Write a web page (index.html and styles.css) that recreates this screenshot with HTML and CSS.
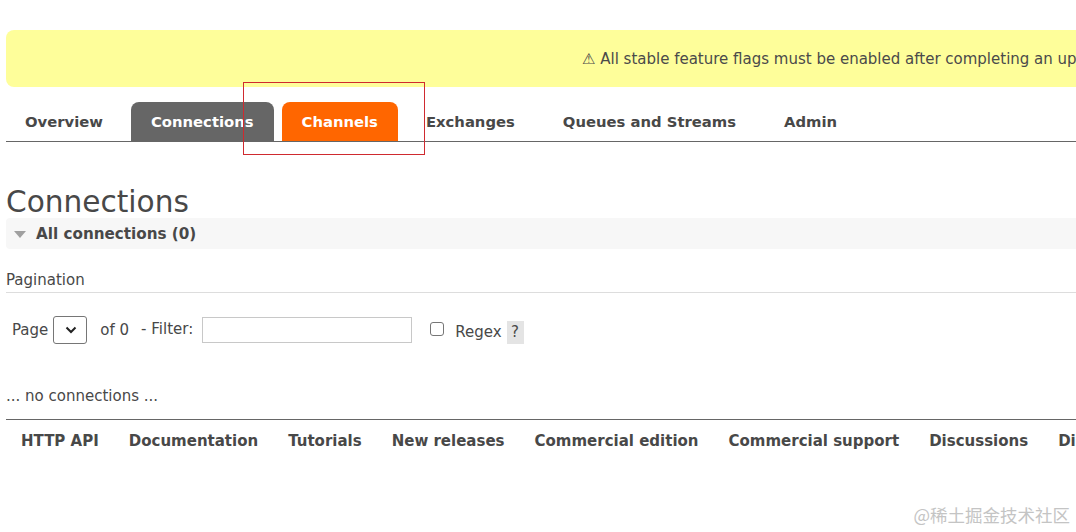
FILE: index.html
```html
<!DOCTYPE html>
<html>
<head>
<meta charset="utf-8">
<link rel="stylesheet" href="styles.css">
</head>
<body>
<div class="page">
  <div class="banner"><span class="banner-text">⚠ All stable feature flags must be enabled after completing an upgrade. Without enabling all flags, the upcoming releases cannot be used.</span></div>

  <ul class="tabs">
    <li class="tab">Overview</li>
    <li class="tab tab-selected">Connections</li>
    <li class="tab tab-hover">Channels</li>
    <li class="tab">Exchanges</li>
    <li class="tab">Queues and Streams</li>
    <li class="tab">Admin</li>
  </ul>

  <h1 class="title">Connections</h1>

  <div class="section-head">
    <span class="tri"></span>
    <span class="section-title">All connections (0)</span>
  </div>

  <div class="pagination-label">Pagination</div>

  <div class="filter-row">
    <span>Page</span>
    <span class="select"><svg width="12" height="8" viewBox="0 0 12 8"><path d="M1.5 1.5 L6 6 L10.5 1.5" fill="none" stroke="#222" stroke-width="2"/></svg></span>
    <span class="of">of 0</span>
    <span class="dash">- Filter:</span>
    <span class="input"></span>
    <span class="checkbox"></span>
    <span class="regex">Regex</span>
    <span class="help">?</span>
  </div>

  <div class="empty">... no connections ...</div>

  <ul class="footer">
    <li>HTTP API</li>
    <li>Documentation</li>
    <li>Tutorials</li>
    <li>New releases</li>
    <li>Commercial edition</li>
    <li>Commercial support</li>
    <li>Discussions</li>
    <li>Discord</li>
  </ul>
</div>
<div class="annot"></div>
<div class="watermark">@稀土掘金技术社区</div>
</body>
</html>
```

FILE: styles.css
```css
html, body {
  margin: 0;
  padding: 0;
  background: #fff;
  overflow: hidden;
  width: 1076px;
  height: 532px;
}
body {
  font-family: "DejaVu Sans", Verdana, sans-serif;
  color: #484848;
  position: relative;
}
.page {
  padding: 30px 0 0 6px;
  width: 1400px;
}
.banner {
  background: #fefe9a;
  border-radius: 8px 0 0 8px;
  height: 57px;
  display: flex;
  align-items: center;
  padding-left: 576px;
  white-space: nowrap;
  font-size: 15px;
  color: #4a4a4a;
}
.tabs {
  list-style: none;
  margin: 15px 0 0 0;
  padding: 0;
  display: flex;
  gap: 8px;
  border-bottom: 1px solid #666;
  width: 1070px;
  white-space: nowrap;
}
.tab {
  height: 39px;
  padding: 0 20px;
  display: flex;
  align-items: center;
  font-weight: bold;
  font-size: 14.8px;
  color: #484848;
  border-radius: 8px 8px 0 0;
  box-sizing: border-box;
}
.tab:first-child { padding-left: 19px; }
.tab-selected {
  background: #666;
  color: #fff;
}
.tab-hover {
  background: #f60;
  color: #fff;
}
.title {
  margin: 43px 0 0 0;
  font-weight: normal;
  font-size: 29.6px;
  line-height: 34px;
  color: #484848;
}
.section-head {
  margin-top: -1px;
  background: #f7f7f7;
  height: 31px;
  width: 1070px;
  display: flex;
  align-items: center;
  border-radius: 4px 0 0 4px;
}
.tri {
  width: 0;
  height: 0;
  border-left: 6.5px solid transparent;
  border-right: 6.5px solid transparent;
  border-top: 7px solid #a0a0a0;
  margin: 2px 10px 0 8px;
}
.section-title {
  font-weight: bold;
  font-size: 15.2px;
}
.pagination-label {
  margin-top: 22px;
  font-size: 15px;
  line-height: 18px;
  padding-bottom: 3px;
  border-bottom: 1px solid #ddd;
  width: 1070px;
}
.filter-row {
  margin-top: 22px;
  display: flex;
  align-items: center;
  font-size: 15px;
  padding-left: 6px;
  height: 30px;
}
.select {
  width: 32px;
  height: 26px;
  border: 1px solid #767676;
  border-radius: 3px;
  margin-left: 5px;
  display: flex;
  align-items: center;
  justify-content: center;
  box-sizing: content-box;
}
.select svg { margin-left: 2px; }
.of { margin-left: 13px; }
.dash { margin-left: 12px; margin-top: -3px; }
.input {
  margin-left: 9px;
  width: 208px;
  height: 24px;
  border: 1px solid #c8c8c8;
}
.checkbox {
  margin-left: 18px;
  width: 12px;
  height: 12px;
  border: 1px solid #767676;
  border-radius: 3px;
  margin-top: -2px;
}
.regex { margin-left: 11px; margin-top: 4px; }
.help {
  margin-left: 5px;
  background: #e4e4e4;
  width: 17px;
  height: 23px;
  margin-top: 4px;
  display: flex;
  align-items: center;
  justify-content: center;
}
.empty {
  margin-top: 42px;
  font-size: 15px;
  line-height: 18px;
}
.footer {
  list-style: none;
  margin: 14px 0 0 0;
  padding: 12px 0 0 15px;
  border-top: 1px solid #666;
  display: flex;
  gap: 30px;
  width: 1400px;
  font-weight: bold;
  font-size: 15px;
  white-space: nowrap;
}
.annot {
  position: absolute;
  left: 243px;
  top: 82px;
  width: 180px;
  height: 71px;
  border: 1.6px solid #cf2a2f;
}
.watermark {
  position: absolute;
  right: 6px;
  bottom: 5px;
  font-family: "Noto Sans CJK SC", sans-serif;
  font-size: 17.5px;
  color: #c4c4c4;
  letter-spacing: 0;
}
```
